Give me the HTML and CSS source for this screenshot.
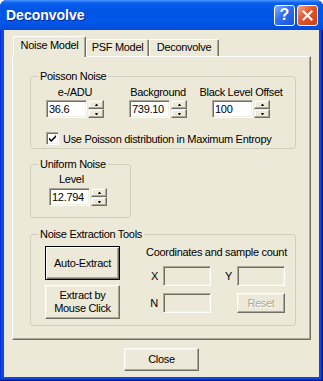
FILE: index.html
```html
<!DOCTYPE html>
<html lang="en">
<head>
    <meta charset="UTF-8">
    <title>Deconvolve</title>
    <link rel="stylesheet" href="styles.css">
</head>
<body>
    <div class="window">
        <div class="titlebar">
            <span class="title">Deconvolve</span>
            <div class="cap-btns">
                <span class="cap-btn help">?</span>
                <span class="cap-btn close">
                    <svg width="13" height="13" viewBox="0 0 13 13"><path d="M2.5 2.5 L10.5 10.5 M10.5 2.5 L2.5 10.5" stroke="#fff" stroke-width="2.2" stroke-linecap="square"/></svg>
                </span>
            </div>
        </div>

        <div class="client">
            <div class="tabs">
                <div class="tab active">Noise Model</div>
                <div class="tab psf">PSF Model</div>
                <div class="tab deco">Deconvolve</div>
            </div>

            <div class="panel">
                <fieldset class="group poisson">
                    <legend>Poisson Noise</legend>
                    <div class="group-body">
                        <div class="fields">
                            <div class="field">
                                <span class="cap">e-/ADU</span>
                                <div class="spin"><div class="edit">36.6</div><div class="arrows"><span class="up"></span><span class="down"></span></div></div>
                            </div>
                            <div class="field">
                                <span class="cap">Background</span>
                                <div class="spin"><div class="edit">739.10</div><div class="arrows"><span class="up"></span><span class="down"></span></div></div>
                            </div>
                            <div class="field">
                                <span class="cap">Black Level Offset</span>
                                <div class="spin"><div class="edit">100</div><div class="arrows"><span class="up"></span><span class="down"></span></div></div>
                            </div>
                        </div>
                        <label class="check">
                            <span class="box"><svg width="11" height="11" viewBox="0 0 11 11"><path d="M2 4.5 L4.3 6.8 L9 2.1 L9 4.3 L4.3 9 L2 6.7 Z" fill="#000"/></svg></span>
                            Use Poisson distribution in Maximum Entropy
                        </label>
                    </div>
                </fieldset>

                <fieldset class="group uniform">
                    <legend>Uniform Noise</legend>
                    <div class="group-body">
                        <span class="cap level">Level</span>
                        <div class="spin"><div class="edit">12.794</div><div class="arrows"><span class="up"></span><span class="down"></span></div></div>
                    </div>
                </fieldset>

                <fieldset class="group extract">
                    <legend>Noise Extraction Tools</legend>
                    <div class="group-body extract-row">
                        <div class="btn-col">
                            <div class="btn default">Auto-Extract</div>
                            <div class="btn">Extract by<br>Mouse Click</div>
                        </div>
                        <div class="coords">
                            <div class="coords-title">Coordinates and sample count</div>
                            <span class="lbl">X</span>
                            <div class="edit off"></div>
                            <span class="lbl">Y</span>
                            <div class="edit off"></div>
                            <span class="lbl">N</span>
                            <div class="edit off"></div>
                            <span></span>
                            <div class="btn off">Reset</div>
                        </div>
                    </div>
                </fieldset>
            </div>

            <div class="footer">
                <div class="btn close-btn">Close</div>
            </div>
        </div>
    </div>
</body>
</html>
```

FILE: styles.css
```css
*{
    margin: 0;
    padding: 0;
    box-sizing: border-box;
}
body{
    width: 323px;
    height: 381px;
    background: #fff;
    font-family: "Liberation Sans", Arial, sans-serif;
    font-size: 11px;
    letter-spacing: -0.3px;
    color: #000;
}
.window{
    width: 323px;
    height: 381px;
    display: flex;
    flex-direction: column;
    padding: 0 4px 4px;
    background: #0A4ADC;
    box-shadow: inset -1px -1px #00138C, inset 1px 0 #0831D9, inset -2px -2px #0831D9;
    border-radius: 7px 7px 0 0;
}

/* title bar */
.titlebar{
    flex: none;
    height: 30px;
    margin: 0 -4px;
    padding: 0 5px 0 6px;
    display: flex;
    align-items: center;
    border-radius: 7px 7px 0 0;
    background: linear-gradient(#4A97FF, #0A5FEE 3px, #0055E5 10px, #0057E8 22px, #004BD8 30px);
}
.title{
    flex: 1;
    color: #fff;
    font-weight: bold;
    font-size: 14px;
    letter-spacing: 0;
    text-shadow: 1px 1px #0A2A9A;
}
.cap-btns{
    display: flex;
    gap: 2px;
}
.cap-btn{
    width: 21px;
    height: 21px;
    border: 1px solid #fff;
    border-radius: 3px;
    display: flex;
    align-items: center;
    justify-content: center;
}
.help{
    background: linear-gradient(135deg, #7EB0FF, #2F6CF0 45%, #1D52D8);
    color: #fff;
    font-weight: bold;
    font-size: 16px;
    letter-spacing: 0;
}
.close{
    background: linear-gradient(135deg, #F4A285, #E1552A 45%, #C8401A);
}

/* client area */
.client{
    flex: 1;
    display: flex;
    flex-direction: column;
    padding: 6px 8px;
    background: #ECE9D8;
}
.tabs{
    height: 20px;
    display: flex;
    align-items: flex-end;
    padding-left: 1px;
}
.tab{
    height: 17px;
    background: #ECE9D8;
    border-top: 1px solid #fff;
    border-left: 1px solid #fff;
    border-right: 1px solid #716F64;
    box-shadow: inset -1px 0 #ACA899;
    border-radius: 2px 2px 0 0;
    text-align: center;
    line-height: 15px;
}
.tab.active{
    position: relative;
    z-index: 1;
    width: 73px;
    height: 21px;
    margin-bottom: -1px;
    line-height: 17px;
}
.tab.psf{
    width: 63px;
}
.tab.deco{
    width: 70px;
}
.panel{
    height: 284px;
    padding: 13px 0 0 17px;
    border: 1px solid;
    border-color: #fff #716F64 #716F64 #fff;
    box-shadow: inset -1px -1px #ACA899;
}

/* group boxes */
.group{
    min-width: 0;
    border: 1px solid #D0D0BF;
    border-radius: 3px;
}
.group legend{
    margin-left: 7px;
    padding: 0 2px;
    line-height: 12px;
}
.poisson{
    width: 266px;
}
.poisson .group-body{
    padding: 4px 0 3px 15px;
}
.uniform{
    width: 101px;
    margin-top: 9px;
}
.uniform .group-body{
    padding: 3px 0 11px 18px;
}
.extract{
    width: 266px;
    margin-top: 10px;
}
.extract .group-body{
    padding: 6px 0 6px 14px;
}
.fields{
    display: flex;
    gap: 25px;
}
.field{
    width: 58px;
    display: flex;
    flex-direction: column;
    align-items: center;
    gap: 1px;
}
.cap{
    display: block;
    line-height: 13px;
    white-space: nowrap;
}
.level{
    margin: 0 0 2px 10px;
}

/* spin edit */
.spin{
    width: 58px;
    height: 18px;
    display: flex;
    gap: 1px;
}
.edit{
    width: 41px;
    height: 18px;
    display: flex;
    align-items: center;
    padding-left: 2px;
    background: #fff;
    border: 1px solid;
    border-color: #ACA899 #fff #fff #ACA899;
    box-shadow: inset 1px 1px #716F64, inset -1px -1px #F1EFE2;
}
.edit.off{
    width: 48px;
    height: 20px;
    background: #ECE9D8;
}
.arrows{
    width: 16px;
    display: flex;
    flex-direction: column;
}
.arrows span{
    flex: 1;
    display: flex;
    align-items: center;
    justify-content: center;
    background: #ECE9D8;
    border: 1px solid;
    border-color: #F1EFE2 #716F64 #716F64 #F1EFE2;
    box-shadow: inset -1px -1px #ACA899, inset 1px 1px #fff;
}
.arrows span::after{
    content: "";
    width: 1px;
    border-left: 1px solid transparent;
    border-right: 1px solid transparent;
}
.arrows .up::after{
    border-bottom: 2px solid #000;
}
.arrows .down::after{
    border-top: 2px solid #000;
}

/* checkbox */
.check{
    display: flex;
    align-items: center;
    gap: 4px;
    margin-top: 14px;
    height: 13px;
    white-space: nowrap;
}
.box{
    width: 13px;
    height: 13px;
    background: #fff;
    border: 1px solid;
    border-color: #ACA899 #fff #fff #ACA899;
    box-shadow: inset 1px 1px #716F64, inset -1px -1px #F1EFE2;
    display: flex;
    align-items: center;
    justify-content: center;
}

/* push buttons */
.btn{
    display: flex;
    align-items: center;
    justify-content: center;
    text-align: center;
    line-height: 13px;
    background: #ECE9D8;
    border: 1px solid;
    border-color: #fff #716F64 #716F64 #fff;
    box-shadow: inset -1px -1px #ACA899, inset 1px 1px #F1EFE2;
}
.btn.default{
    border-color: #000;
    box-shadow: inset 1px 1px #fff, inset -1px -1px #716F64, inset -2px -2px #ACA899;
}
.btn.off{
    color: #ACA899;
    text-shadow: 1px 1px #fff;
}
.extract-row{
    display: flex;
}
.btn-col{
    width: 75px;
    display: flex;
    flex-direction: column;
    gap: 5px;
}
.btn-col .btn{
    height: 34px;
}
.coords{
    margin-left: 28px;
    display: grid;
    grid-template-columns: 12px 48px 20px 48px;
    grid-template-rows: 13px 20px 20px;
    column-gap: 3px;
    row-gap: 7px;
}
.coords-title{
    grid-column: 1 / -1;
    margin: 0 -6px;
    text-align: center;
    white-space: nowrap;
    line-height: 13px;
}
.lbl{
    display: flex;
    align-items: center;
    justify-content: flex-end;
    padding-right: 2px;
}
.footer{
    display: flex;
    justify-content: center;
    margin-top: 8px;
}
.close-btn{
    width: 75px;
    height: 23px;
}
```
